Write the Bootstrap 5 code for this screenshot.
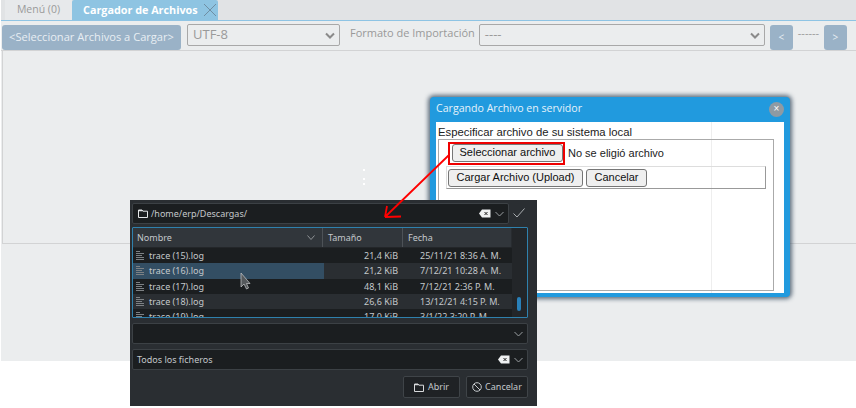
<!DOCTYPE html>
<html lang="en">
<head>
    <meta charset="UTF-8">
    <title>Cargador de Archivos</title>
    <link href="https://cdn.jsdelivr.net/npm/bootstrap@5.3.2/dist/css/bootstrap.min.css" rel="stylesheet">
    <style>
        html, body { height: 408px; overflow: hidden; background: #fff; }
        body { font-family: "Open Sans", sans-serif; font-size: 11px; position: relative; }
        .app-shell { height: 361px; margin-left: 1px; background: #ebedee; }
        .tab-bar { height: 21px; background: #e1e3e5; border-bottom: 1px solid #8ec4e4; padding-left: 4px; }
        .tab-plain { width: 67px; background: #e7e9eb; color: #9a9a9a; font-size: 10.5px; }
        .tab-active { width: 146px; background: #8ec4e2; color: #fff; font-weight: 700; font-size: 10.8px; padding: 0 1px 0 11px; border-radius: 2px 2px 0 0; }
        .tool-bar { height: 30px; padding: 4px 0 0 1px; border-bottom: 1px solid #d2d3d4; }
        .tool-btn { height: 25px; background: #9ab2c7; color: #e8eef3; border-radius: 3px; font-size: 11.1px; }
        .btn-load { width: 179px; }
        .btn-page { width: 23px; font-size: 10px; }
        .fake-select { height: 22px; border: 1px solid #a8a8a8; border-radius: 2px; color: #9a9a9a; padding: 0 4px 0 5px; font-size: 13px; margin-top: -1px; }
        .sel-enc { width: 153px; margin-left: 6px; }
        .sel-fmt { width: 286px; margin-left: 4px; }
        .tool-label { color: #999; font-size: 11px; line-height: 1; margin-top: 2px; }
        .label-fmt { margin-left: 10px; }
        .label-page { margin-left: 5px; width: 26px; }
        .btn-prev { margin-left: 5px; }
        .content-area { height: 193px; margin-left: 1px; border-left: 1px solid #d2d3d4; border-bottom: 1px solid #d2d3d4; position: relative; }
        .speck { position: absolute; left: 360px; width: 2px; height: 2px; background: #fff; }
        .speck-a { top: 118px; }
        .speck-b { top: 127px; }
        .speck-c { top: 132px; }

        .upload-win { position: absolute; left: 430px; top: 97px; width: 360px; height: 200px; background: #219ade; border-radius: 4px; box-shadow: 0 0 4px 2px rgba(50, 70, 90, .75); padding: 0 6px 4px; }
        .upload-head { height: 25px; color: #e6f2fa; font-size: 10.6px; }
        .upload-title { margin-top: -2px; }
        .upload-close { width: 15px; height: 15px; border-radius: 50%; background: #8f9aa3; color: #fff; font-size: 10px; line-height: 14px; text-align: center; font-family: "Liberation Sans", sans-serif; }
        .upload-body { height: 171px; background: #fff; font-family: "Liberation Sans", sans-serif; font-size: 11px; color: #222; padding: 0 2px; position: relative; }
        .upload-body .v-rule { position: absolute; left: 275px; top: 0; bottom: 0; width: 1px; background: #eee; }
        .upload-label { height: 17px; padding-top: 4px; font-size: 11.3px; line-height: 13px; position: relative; }
        .file-box { position: relative; height: 152px; margin-right: 8px; border: 1px solid #aaa; padding: 2px 0 0 9px; }
        .form-btn { background: #efefef; border: 1px solid #767676; border-radius: 3px; color: #111; font-size: 11px; height: 18px; line-height: 15px; padding: 0 7.5px; }
        .file-pick { border: 2px solid #e00; width: 117px; padding: 0 0 1px 2px; }
        .file-pick .form-btn { width: 111px; text-align: center; padding: 0; }
        .file-none { margin-left: 3px; }
        .btn-row { height: 23px; border: 1px solid #999; border-top-color: #ddd; border-left-color: #ddd; margin: 1px 0 0 -2px; padding: 2px 1px; width: 320px; gap: 3px; }

        .kde-dialog { position: absolute; left: 130px; top: 200px; width: 407px; height: 206px; background: #2a2e32; color: #c4c8cb; font-family: "Noto Sans", sans-serif; font-size: 9px; padding: 3px 9px 0 2px; }
        .kde-field { height: 21px; background: #1b1e20; border: 1px solid #3c4145; border-radius: 2px; padding: 0 4px; }
        .path-row { margin-right: 19px; position: relative; }
        .path-icon { margin: 0 3px 0 1px; }
        .path-ok { position: absolute; right: -18px; top: 3px; }
        .file-table { height: 91px; margin-top: 3px; border: 1px solid #2f81ad; border-radius: 1px; overflow: hidden; background: #1b1e20; position: relative; }
        .file-head { height: 20px; background: #31363b; border-bottom: 1px solid #232629; }
        .col-name { width: 190px; border-right: 1px solid #4d5257; padding: 0 4px; }
        .col-name svg { margin-right: 3px; }
        .col-size { width: 80px; border-right: 1px solid #4d5257; padding-left: 5px; }
        .col-date { width: 109px; border-right: 1px solid #282c30; padding-left: 5px; }
        .file-row { height: 15.33px; position: relative; }
        .row-alt { background: #2a2e32; }
        .sel-mark { position: absolute; left: 0; top: 0; bottom: 0; width: 191px; background: #334e63; }
        .cell-name { width: 191px; padding-left: 3px; position: relative; }
        .cell-name span { margin-left: 5px; }
        .cell-size { width: 74px; text-align: right; position: relative; }
        .cell-date { padding-left: 22px; position: relative; }
        .v-scroll { position: absolute; right: 0; top: 0; bottom: 0; width: 15px; background: #232629; }
        .v-thumb { position: absolute; left: 5px; top: 69px; width: 4px; height: 14px; border-radius: 2px; background: #2980b9; }
        .kde-gap { margin-top: 5px; }
        .kde-btn { height: 22px; background: #1f2225; border: 1px solid #3f4448; border-radius: 2px; color: #c4c8cb; gap: 4px; }
        .btn-open { width: 57px; }
        .btn-cancel { width: 62px; margin-left: 6px; gap: 3px; }
        .kde-foot { margin-top: 6px; }
        .layer-svg { position: absolute; left: 0; top: 0; pointer-events: none; }
    </style>
</head>
<body>
<div class="app-shell">
    <div class="tab-bar d-flex">
        <div class="tab-plain d-flex align-items-center justify-content-center">Menú (0)</div>
        <div class="tab-active d-flex align-items-center justify-content-between">
            <span>Cargador de Archivos</span>
            <svg width="14" height="14" viewBox="0 0 14 14"><path d="M1 1L13 13M13 1L1 13" stroke="#6f8ea3" stroke-width="1" fill="none"/></svg>
        </div>
    </div>
    <div class="tool-bar d-flex">
        <div class="tool-btn btn-load d-flex align-items-center justify-content-center">&lt;Seleccionar Archivos a Cargar&gt;</div>
        <div class="fake-select sel-enc d-flex align-items-center justify-content-between">
            <span>UTF-8</span>
            <svg width="10" height="7" viewBox="0 0 10 7"><path d="M1 1.5L5 5.5L9 1.5" stroke="#8a8a8a" stroke-width="2" fill="none"/></svg>
        </div>
        <div class="tool-label label-fmt">Formato de Importación</div>
        <div class="fake-select sel-fmt d-flex align-items-center justify-content-between">
            <span>----</span>
            <svg width="10" height="7" viewBox="0 0 10 7"><path d="M1 1.5L5 5.5L9 1.5" stroke="#8a8a8a" stroke-width="2" fill="none"/></svg>
        </div>
        <div class="tool-btn btn-page btn-prev d-flex align-items-center justify-content-center">&lt;</div>
        <div class="tool-label label-page">------</div>
        <div class="tool-btn btn-page d-flex align-items-center justify-content-center">&gt;</div>
    </div>
    <div class="content-area">
        <div class="speck speck-a"></div>
        <div class="speck speck-b"></div>
        <div class="speck speck-c"></div>
    </div>
</div>

<div class="upload-win">
    <div class="upload-head d-flex align-items-center justify-content-between">
        <span class="upload-title">Cargando Archivo en servidor</span>
        <div class="upload-close">×</div>
    </div>
    <div class="upload-body">
        <div class="v-rule"></div>
        <div class="upload-label">Especificar archivo de su sistema local</div>
        <div class="file-box">
            <div class="d-flex align-items-center">
                <div class="file-pick"><div class="form-btn">Seleccionar archivo</div></div>
                <span class="file-none">No se eligió archivo</span>
            </div>
            <div class="btn-row d-flex">
                <div class="form-btn">Cargar Archivo (Upload)</div>
                <div class="form-btn">Cancelar</div>
            </div>
        </div>
    </div>
</div>

<div class="kde-dialog">
    <div class="kde-field path-row d-flex align-items-center">
        <svg width="10" height="9" viewBox="0 0 10 9" class="path-icon"><path d="M.5 1h3.500l1 1.200h4.500v6.300h-9z" fill="none" stroke="#e4e6e8"/><path d="M.5 1h3.500l1 1.200h-4.500z" fill="#e4e6e8"/></svg>
        <span>/home/erp/Descargas/</span>
        <svg class="ms-auto" width="12" height="9" viewBox="0 0 12 9"><path d="M3 .5h8.500v8H3L0 4.500z" fill="#eef0f1"/><path d="M5.500 3l3 3M8.500 3l-3 3" stroke="#222" stroke-width="1"/></svg>
        <svg class="ms-1" width="9" height="6" viewBox="0 0 9 6"><path d="M.5 1L4.500 5L8.500 1" stroke="#9a9ea1" fill="none"/></svg>
        <svg class="path-ok" width="14" height="12" viewBox="0 0 14 12"><path d="M1.500 6.500L5 10L12.500 1.500" stroke="#a9adb0" fill="none"/></svg>
    </div>
    <div class="file-table">
        <div class="file-head d-flex align-items-center">
            <div class="col-name d-flex h-100 align-items-center justify-content-between">Nombre
                <svg width="8" height="5" viewBox="0 0 8 5"><path d="M.5 .5L4 4.500L7.500 .5" stroke="#8f9396" fill="none"/></svg>
            </div>
            <div class="col-size h-100 d-flex align-items-center">Tamaño</div>
            <div class="col-date h-100 d-flex align-items-center">Fecha</div>
        </div>
        <div id="rows"></div>
        <div class="v-scroll"><div class="v-thumb"></div></div>
    </div>
    <div class="kde-field kde-gap d-flex align-items-center justify-content-end">
        <svg width="9" height="6" viewBox="0 0 9 6"><path d="M.5 1L4.500 5L8.500 1" stroke="#9a9ea1" fill="none"/></svg>
    </div>
    <div class="kde-field kde-gap d-flex align-items-center">
        <span>Todos los ficheros</span>
        <svg class="ms-auto" width="12" height="9" viewBox="0 0 12 9"><path d="M3 .5h8.500v8H3L0 4.500z" fill="#eef0f1"/><path d="M5.500 3l3 3M8.500 3l-3 3" stroke="#222" stroke-width="1"/></svg>
        <svg class="ms-1" width="9" height="6" viewBox="0 0 9 6"><path d="M.5 1L4.500 5L8.500 1" stroke="#9a9ea1" fill="none"/></svg>
    </div>
    <div class="kde-foot d-flex justify-content-end">
        <div class="kde-btn btn-open d-flex align-items-center justify-content-center">
            <svg width="10" height="9" viewBox="0 0 10 9"><path d="M.5 1h3.500l1 1.200h4.500v6.300h-9z" fill="none" stroke="#d8dadc"/><path d="M.5 1h3.500l1 1.200h-4.500z" fill="#d8dadc"/></svg>
            Abrir
        </div>
        <div class="kde-btn btn-cancel d-flex align-items-center justify-content-center">
            <svg width="10" height="10" viewBox="0 0 10 10"><circle cx="5" cy="5" r="4.300" fill="none" stroke="#c4c8cb"/><path d="M2 2L8 8" stroke="#c4c8cb"/></svg>
            Cancelar
        </div>
    </div>
</div>

<svg class="layer-svg" width="856" height="408" viewBox="0 0 856 408">
    <path d="M449 155L385 217M385 217L387 206M385 217L401 216.500" stroke="#f00" stroke-width="1.800" fill="none"/>
    <path d="M241 273V287L244 284L246.500 289L248.500 288L246.500 283.500H250z" fill="#55595c" stroke="#c8cacc" stroke-width=".7"/>
</svg>

<script>
    const files = [
        ['trace (15).log', '21,4 KiB', '25/11/21 8:36 A. M.'],
        ['trace (16).log', '21,2 KiB', '7/12/21 10:28 A. M.'],
        ['trace (17).log', '48,1 KiB', '7/12/21 2:36 P. M.'],
        ['trace (18).log', '26,6 KiB', '13/12/21 4:15 P. M.'],
        ['trace (19).log', '17,0 KiB', '3/1/22 3:20 P. M.']
    ];
    const icon = '<svg width="8" height="9" viewBox="0 0 8 9"><path d="M0 .5h4M0 2.500h8M0 4.500h6M0 6.500h8M0 8.500h8" stroke="#7d8184" fill="none"/></svg>';
    document.getElementById('rows').innerHTML = files.map((f, i) => `
        <div class="file-row d-flex align-items-center ${i % 2 ? 'row-alt' : ''}">
            ${i === 1 ? '<div class="sel-mark"></div>' : ''}
            <div class="cell-name d-flex align-items-center">${icon}<span>${f[0]}</span></div>
            <div class="cell-size">${f[1]}</div>
            <div class="cell-date">${f[2]}</div>
        </div>`).join('');
</script>
<script src="https://cdn.jsdelivr.net/npm/bootstrap@5.3.2/dist/js/bootstrap.bundle.min.js"></script>
</body>
</html>
